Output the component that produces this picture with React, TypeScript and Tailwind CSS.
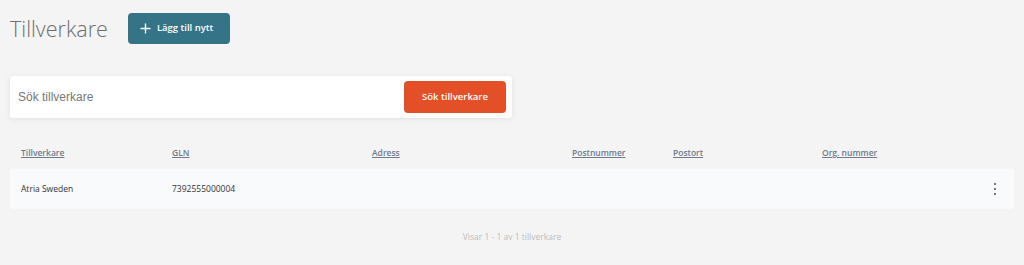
import React from "react";

const cols = [
  { label: "Tillverkare", w: "w-[151px]" },
  { label: "GLN", w: "w-[200px]" },
  { label: "Adress", w: "w-[200px]" },
  { label: "Postnummer", w: "w-[101px]" },
  { label: "Postort", w: "w-[149px]" },
  { label: "Org. nummer", w: "w-[150px]" },
];

export default function App() {
  return (
    <div className="min-h-[265px] w-[1024px] bg-[#f4f4f4] font-['Open_Sans',sans-serif]">
      <div className="flex items-center pl-[10px] pt-[13px]">
        <h1 className="text-[21.5px] font-light leading-[31px] text-[#6e6e6e]">Tillverkare</h1>
        <button className="ml-[20px] flex h-[31px] w-[102px] items-center gap-[6px] rounded-[4px] bg-[#357487] pl-[12px] text-[9.5px] font-semibold text-white">
          <svg width="11" height="11" viewBox="0 0 11 11" fill="none" stroke="white" strokeWidth="1.4">
            <path d="M5.5 0.5v10M0.5 5.5h10" />
          </svg>
          Lägg till nytt
        </button>
      </div>

      <div className="ml-[10px] mt-[32px] flex h-[42px] w-[502px] items-center justify-between rounded-[3px] bg-white pl-[8px] pr-[6px] shadow-[0_1px_6px_rgba(0,0,0,0.08)]">
        <span className="font-['Liberation_Sans',sans-serif] text-[12px] text-[#777]">Sök tillverkare</span>
        <button className="flex h-[32px] w-[102px] items-center justify-center rounded-[4px] bg-[#e34f26] text-[9.5px] font-semibold text-white">
          Sök tillverkare
        </button>
      </div>

      <div className="mx-[10px] mt-[20px]">
        <div className="flex h-[24px] items-center pl-[11px]">
          {cols.map((c) => (
            <div key={c.label} className={c.w}>
              <span className="text-[8.5px] font-semibold text-[#6f7a8c] underline">{c.label}</span>
            </div>
          ))}
        </div>
        <div className="mt-[7px] flex h-[40px] items-center rounded-[2px] bg-[#f9fafb] pl-[11px] pr-[18px] text-[8.5px] text-[#333]">
          <div className="w-[151px]">Atria Sweden</div>
          <div className="w-[200px]">7392555000004</div>
          <div className="flex-1" />
          <div className="flex flex-col gap-[3px]">
            <span className="h-[2px] w-[2px] bg-[#777]" />
            <span className="h-[2px] w-[2px] bg-[#777]" />
            <span className="h-[2px] w-[2px] bg-[#777]" />
          </div>
        </div>
      </div>

      <div className="mt-[22px] text-center text-[8.5px] text-[#bdbdbd]">Visar 1 - 1 av 1 tillverkare</div>
    </div>
  );
}
